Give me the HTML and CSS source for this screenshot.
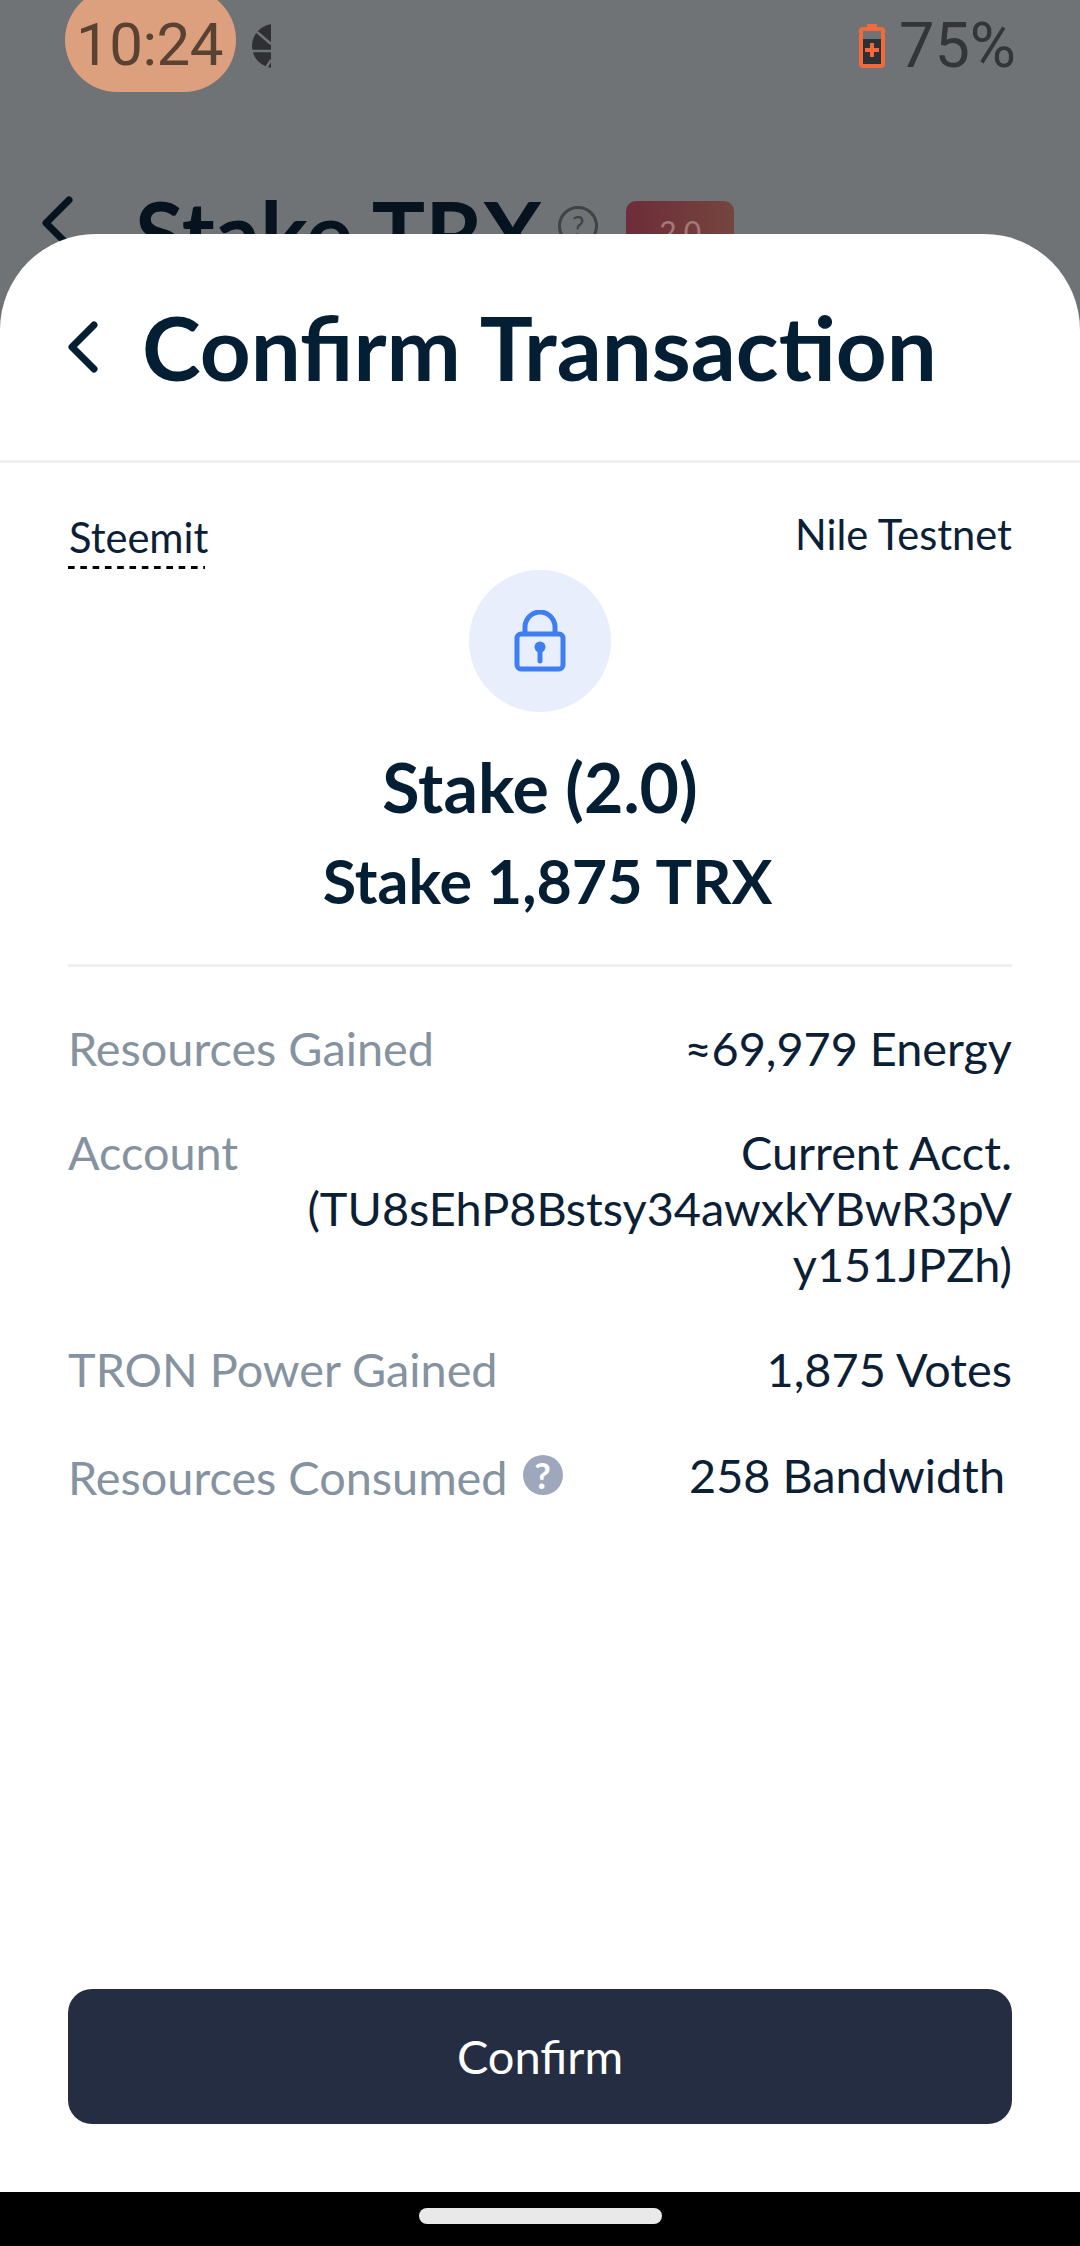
FILE: index.html
```html
<!DOCTYPE html>
<html>
<head>
	<meta charset="utf-8">
	<title>Confirm Transaction</title>
	<link rel="stylesheet" href="styles.css">
</head>
<body>
	<div class="page">
		<!-- dimmed page behind the sheet -->
		<div class="backdrop">
			<div class="status">
				<div class="status-left">
					<span class="clock">10:24</span>
					<svg class="pin" width="19" height="44" viewBox="0 0 19 44">
						<circle cx="22" cy="22" r="22" fill="#2e3033"/>
						<path d="M5 8L19 20M0 27H19M14 44L19 36" stroke="#6f7376" stroke-width="2.5" fill="none"/>
					</svg>
				</div>
				<div class="status-right">
					<svg class="batt" width="26" height="44" viewBox="0 0 26 44">
						<path d="M8 0h10v3h4a4 4 0 0 1 4 4v33a4 4 0 0 1-4 4H4a4 4 0 0 1-4-4V7a4 4 0 0 1 4-4h4z" fill="#f26a3c"/>
						<rect x="4" y="7" width="18" height="33" fill="#6f7376"/>
						<rect x="4" y="15" width="18" height="25" fill="#2e3033"/>
						<path d="M11 19h4v5h5v4h-5v5h-4v-5H6v-4h5z" fill="#f26a3c"/>
					</svg>
					<span class="percent">75%</span>
				</div>
			</div>
			<div class="under-head">
				<svg class="under-back" width="34" height="54" viewBox="0 0 34 54"><path d="M29 4L6 27l23 23" fill="none" stroke="#06131e" stroke-width="7" stroke-linecap="round" stroke-linejoin="round"/></svg>
				<span class="under-title">Stake TRX</span>
				<span class="under-help">?</span>
				<span class="under-badge">2.0</span>
			</div>
		</div>

		<div class="sheet">
			<div class="sheet-head">
				<svg class="back" width="32" height="52" viewBox="0 0 32 52"><path d="M26 4L4 26l22 22" fill="none" stroke="#041e33" stroke-width="7" stroke-linecap="round" stroke-linejoin="round"/></svg>
				<h1 class="title">Confirm Transaction</h1>
			</div>

			<div class="sheet-body">
				<div class="meta">
					<span class="dapp">Steemit</span>
					<span class="network">Nile Testnet</span>
				</div>
				<div class="lock">
					<svg width="52" height="62" viewBox="0 0 52 62">
						<path d="M11 24V17a15 15 0 0 1 30 0v7" fill="none" stroke="#3f7ef0" stroke-width="5"/>
						<rect x="3" y="24" width="46" height="35" rx="4" fill="none" stroke="#3f7ef0" stroke-width="5"/>
						<circle cx="26" cy="37" r="5.5" fill="#3f7ef0"/>
						<path d="M26 38v13" stroke="#3f7ef0" stroke-width="5" stroke-linecap="round"/>
					</svg>
				</div>
				<div class="action">Stake (2.0)</div>
				<div class="amount">Stake 1,875 TRX</div>

				<div class="rows">
					<div class="row">
						<span class="label">Resources Gained</span>
						<span class="value">≈69,979 Energy</span>
					</div>
					<div class="row">
						<span class="label">Account</span>
						<span class="value">Current Acct.<br>(TU8sEhP8Bstsy34awxkYBwR3pV<br>y151JPZh)</span>
					</div>
					<div class="row">
						<span class="label">TRON Power Gained</span>
						<span class="value">1,875 Votes</span>
					</div>
					<div class="row row-last">
						<span class="label">Resources Consumed<i class="help">?</i></span>
						<span class="value">258 Bandwidth</span>
					</div>
				</div>
			</div>

			<div class="sheet-foot">
				<div class="confirm">Confirm</div>
			</div>
		</div>

		<div class="navbar"><span class="pill"></span></div>
	</div>
</body>
</html>
```
FILE: styles.css
```css
* { margin: 0; padding: 0; box-sizing: border-box; }

body { font-family: "Lato", "Liberation Sans", sans-serif; background: #6f7376; }

.page { width: 1080px; height: 2246px; display: flex; flex-direction: column; overflow: hidden; }

/* behind the sheet */
.backdrop { height: 300px; flex: none; }

.status { height: 92px; padding: 0 64px 0 65px; display: flex; justify-content: space-between; }
.status-left { display: flex; align-items: flex-start; }
.clock { width: 171px; height: 104px; margin-top: -12px; padding-right: 2px; border-radius: 52px; background: #dca07e; color: #5a4233; font: 400 60px/114px "Roboto", sans-serif; letter-spacing: -0.5px; text-align: center; }
.pin { margin-left: 16px; margin-top: 24px; }
.status-right { display: flex; align-items: center; gap: 14px; }
.percent { font: 400 63px/90px "Roboto", sans-serif; color: #333537; }

.under-head { display: flex; align-items: flex-start; padding: 104px 0 0 40px; }
.under-title { margin-left: 61px; margin-top: -8px; font-size: 89px; line-height: 90px; font-weight: 700; color: #06131e; white-space: nowrap; }
.under-help { margin-left: 16px; margin-top: 10px; width: 40px; height: 40px; border: 3px solid #3e4347; border-radius: 50%; color: #3e4347; font-size: 28px; line-height: 34px; text-align: center; }
.under-badge { margin-left: 28px; margin-top: 5px; width: 108px; height: 60px; border-radius: 10px; background: linear-gradient(90deg, #6e2c38, #74453f); color: #a5787a; font-size: 30px; line-height: 60px; text-align: center; }

/* sheet */
.sheet { flex: 1; margin-top: -66px; background: #fff; border-radius: 96px 96px 0 0; display: flex; flex-direction: column; position: relative; }

.sheet-head { height: 229px; padding: 0 68px; display: flex; align-items: center; border-bottom: 3px solid #eff0f1; }
.back { flex: none; margin-right: 42px; }
.title { font-size: 88.8px; font-weight: 700; line-height: 106px; color: #041e33; white-space: nowrap; font-variant-ligatures: common-ligatures discretionary-ligatures; }

.sheet-body { flex: 1; padding: 0 68px; }

.meta { display: flex; justify-content: space-between; height: 107px; padding-top: 50px; font-size: 41.6px; line-height: 48px; color: #0b2035; }
.dapp { display: block; height: 56px; width: 137px; padding-left: 1px; white-space: nowrap; background: linear-gradient(90deg, #000 7px, transparent 7px) left bottom / 12.3px 3px repeat-x; }
.network { margin-top: -3px; }

.lock { width: 142px; height: 142px; margin: 0 auto; border-radius: 50%; background: #e8eefb; display: flex; align-items: center; justify-content: center; }

.action { margin-top: 37px; text-align: center; font-size: 68px; line-height: 76px; font-weight: 700; color: #041e33; }
.amount { margin-top: 21px; padding-left: 15px; text-align: center; font-size: 61px; line-height: 70px; font-weight: 700; color: #041e33; }

.rows { margin-top: 48px; padding-top: 53px; border-top: 3px solid #eff0f1; display: flex; flex-direction: column; gap: 48px; }
.row { display: flex; justify-content: space-between; align-items: flex-start; font-size: 46.8px; line-height: 1.2; }
.row-last { margin-top: 4px; }
.label { color: #8592a0; display: flex; align-items: center; }
.value { color: #0b2035; text-align: right; }
.row-last .value { padding-right: 7px; margin-top: -2px; }
.help { margin-left: 15px; margin-top: -4px; width: 40px; height: 40px; border-radius: 50%; background: #9ea7bb; color: #fff; font-style: normal; font-size: 36px; font-weight: 700; line-height: 40px; text-align: center; }

.sheet-foot { padding: 0 68px 68px; }
.confirm { height: 135px; border-radius: 24px; background: #252d42; color: #fff; font-size: 47px; line-height: 135px; text-align: center; }

/* android nav bar */
.navbar { height: 54px; flex: none; background: #000; display: flex; justify-content: center; padding-top: 16px; position: relative; }
.pill { width: 243px; height: 16px; border-radius: 8px; background: #e9e9e9; }
```
